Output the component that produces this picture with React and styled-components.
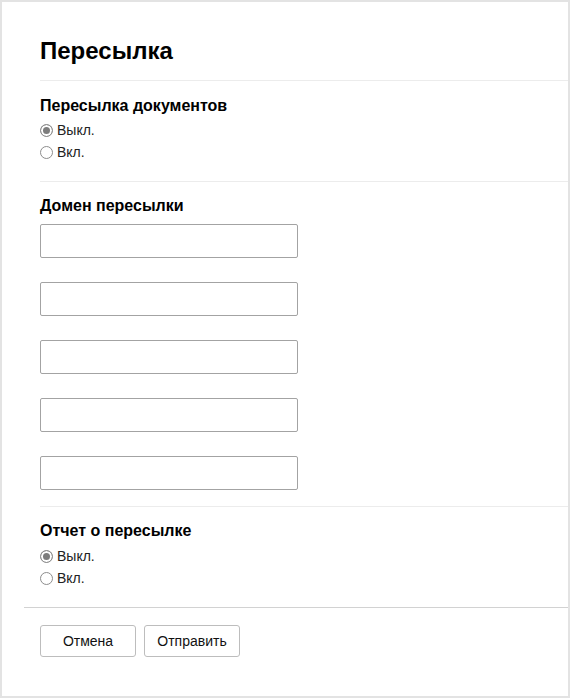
import React, { useState } from "react";
import styled, { createGlobalStyle } from "styled-components";

const GlobalStyle = createGlobalStyle`
  html, body {
    margin: 0;
    padding: 0;
    background: #e3e3e3;
  }
  body {
    font-family: "Liberation Sans", Arial, sans-serif;
    color: #111;
  }
`;

const Panel = styled.div`
  margin: 2px;
  height: 694px;
  background: #fff;
  box-sizing: border-box;
`;

const Header = styled.div`
  margin-left: 38px;
  padding: 35px 0 15px;
  border-bottom: 1px solid #ececec;
`;

const Title = styled.h1`
  margin: 0;
  font-size: 24px;
  line-height: 28px;
  font-weight: bold;
  color: #000;
`;

const Section = styled.div`
  margin-left: 38px;
  padding: ${(p) => p.$pad};
  border-bottom: ${(p) => (p.$last ? "none" : "1px solid #ececec")};
`;

const Label = styled.div`
  font-size: 16px;
  line-height: 18px;
  font-weight: bold;
  color: #000;
  margin-bottom: ${(p) => p.$gap}px;
`;

const Option = styled.label`
  display: flex;
  align-items: center;
  height: 22px;
  font-size: 14px;
  color: #222;
  cursor: pointer;
`;

const Radio = styled.input.attrs({ type: "radio" })`
  appearance: none;
  width: 13px;
  height: 13px;
  margin: 0 4px 0 0;
  border: 1px solid #8d8d8d;
  border-radius: 50%;
  background: #fff;
  box-sizing: border-box;
  &:checked {
    background: #7d7d7d;
    box-shadow: inset 0 0 0 2px #fff;
  }
`;

const Fields = styled.div`
  display: flex;
  flex-direction: column;
  gap: 24px;
`;

const Field = styled.input`
  width: 258px;
  height: 34px;
  box-sizing: border-box;
  border: 1px solid #a3a3a3;
  border-radius: 2px;
  padding: 0 8px;
  font: 14px "Liberation Sans", Arial, sans-serif;
  outline: none;
`;

const Footer = styled.div`
  margin-left: 22px;
  padding: 17px 0 0 16px;
  border-top: 1px solid #d2d2d2;
  display: flex;
  gap: 8px;
`;

const Button = styled.button`
  width: 96px;
  height: 32px;
  background: #fff;
  border: 1px solid #bdbdbd;
  border-radius: 3px;
  font: 14px "Liberation Sans", Arial, sans-serif;
  color: #111;
  cursor: pointer;
`;

const RadioGroup = ({ name, value, onChange }) => (
  <>
    <Option>
      <Radio name={name} checked={value === "off"} onChange={() => onChange("off")} />
      Выкл.
    </Option>
    <Option>
      <Radio name={name} checked={value === "on"} onChange={() => onChange("on")} />
      Вкл.
    </Option>
  </>
);

const App = () => {
  const [forward, setForward] = useState("off");
  const [report, setReport] = useState("off");
  const [domains, setDomains] = useState(["", "", "", "", ""]);

  return (
    <>
      <GlobalStyle />
      <Panel>
        <Header>
          <Title>Пересылка</Title>
        </Header>

        <Section $pad="16px 0 18px">
          <Label $gap={4}>Пересылка документов</Label>
          <RadioGroup name="forward" value={forward} onChange={setForward} />
        </Section>

        <Section $pad="15px 0 16px">
          <Label $gap={9}>Домен пересылки</Label>
          <Fields>
            {domains.map((d, i) => (
              <Field
                key={i}
                value={d}
                onChange={(e) =>
                  setDomains(domains.map((x, j) => (j === i ? e.target.value : x)))
                }
              />
            ))}
          </Fields>
        </Section>

        <Section $pad="15px 0 18px" $last>
          <Label $gap={5}>Отчет о пересылке</Label>
          <RadioGroup name="report" value={report} onChange={setReport} />
        </Section>

        <Footer>
          <Button type="button">Отмена</Button>
          <Button type="button">Отправить</Button>
        </Footer>
      </Panel>
    </>
  );
};

export default App;
